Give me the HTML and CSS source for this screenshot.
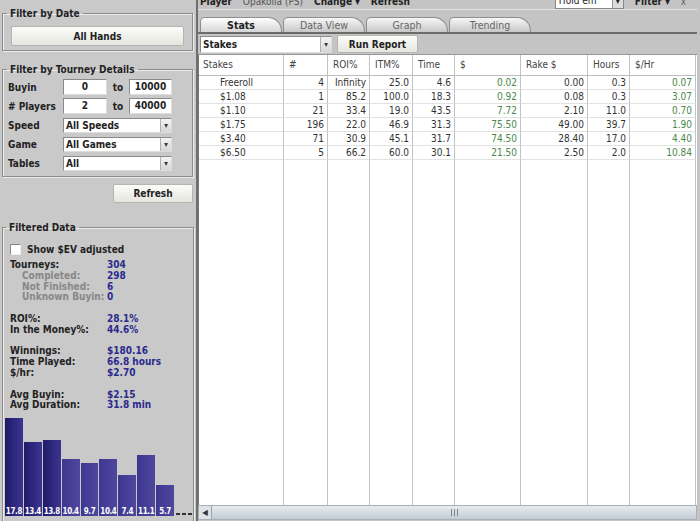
FILE: index.html
```html
<!DOCTYPE html>
<html lang="en">
<head>
    <meta charset="UTF-8">
    <title>Tourney Stats</title>
    <link rel="stylesheet" href="styles.css">
</head>
<body>
    <div class="app">
        <div class="side">
            <fieldset class="date-box">
                <legend>Filter by Date</legend>
                <button class="btn wide">All Hands</button>
            </fieldset>

            <fieldset class="tourney-box">
                <legend>Filter by Tourney Details</legend>
                <div class="filter-grid">
                    <span class="lbl">Buyin</span>
                    <span class="field">0</span>
                    <span class="to">to</span>
                    <span class="field">10000</span>

                    <span class="lbl"># Players</span>
                    <span class="field">2</span>
                    <span class="to">to</span>
                    <span class="field">40000</span>

                    <span class="lbl">Speed</span>
                    <span class="combo span3">All Speeds<i class="arrow">▾</i></span>
                    <span class="lbl">Game</span>
                    <span class="combo span3">All Games<i class="arrow">▾</i></span>
                    <span class="lbl">Tables</span>
                    <span class="combo span3">All<i class="arrow">▾</i></span>
                </div>
            </fieldset>

            <button class="btn refresh">Refresh</button>

            <fieldset class="data-box">
                <legend>Filtered Data</legend>
                <div class="check-row"><span class="check"></span>Show $EV adjusted</div>
                <div class="stats">
                    <span>Tourneys:</span><b>304</b>
                    <span class="sub">Completed:</span><b>298</b>
                    <span class="sub">Not Finished:</span><b>6</b>
                    <span class="sub">Unknown Buyin:</span><b>0</b>
                    <span class="gap"></span>
                    <span>ROI%:</span><b>28.1%</b>
                    <span>In the Money%:</span><b>44.6%</b>
                    <span class="gap"></span>
                    <span>Winnings:</span><b>$180.16</b>
                    <span>Time Played:</span><b>66.8 hours</b>
                    <span>$/hr:</span><b>$2.70</b>
                    <span class="gap"></span>
                    <span>Avg Buyin:</span><b>$2.15</b>
                    <span>Avg Duration:</span><b>31.8 min</b>
                </div>
                <div class="chart" id="chart"></div>
            </fieldset>
        </div>

        <div class="main">
            <div class="topbar">
                <span class="tb-b">Player</span>
                <span class="tb-n">Opakolla (PS)</span>
                <span class="tb-b">Change ▾</span>
                <span class="tb-b">Refresh</span>
                <span class="tb-fill"></span>
                <span class="tb-combo">Hold em<i class="arrow">▾</i></span>
                <span class="tb-b">Filter ▾</span>
                <span class="tb-x">x</span>
            </div>
            <div class="tabs">
                <div class="tab active">Stats</div>
                <div class="tab">Data View</div>
                <div class="tab">Graph</div>
                <div class="tab">Trending</div>
            </div>
            <div class="toolbar">
                <span class="combo report-combo">Stakes<i class="arrow">▾</i></span>
                <button class="btn run">Run Report</button>
            </div>
            <div class="grid" id="grid"></div>
            <div class="hscroll">
                <span class="hs-arrow">◀</span>
                <span class="hs-thumb"><span class="grip"></span></span>
            </div>
        </div>
    </div>

    <script>
        const headers = ['Stakes', '#', 'ROI%', 'ITM%', 'Time', '$', 'Rake $', 'Hours', '$/Hr'];
        const rows = [
            ['Freeroll', '4', 'Infinity', '25.0', '4.6', '0.02', '0.00', '0.3', '0.07'],
            ['$1.08', '1', '85.2', '100.0', '18.3', '0.92', '0.08', '0.3', '3.07'],
            ['$1.10', '21', '33.4', '19.0', '43.5', '7.72', '2.10', '11.0', '0.70'],
            ['$1.75', '196', '22.0', '46.9', '31.3', '75.50', '49.00', '39.7', '1.90'],
            ['$3.40', '71', '30.9', '45.1', '31.7', '74.50', '28.40', '17.0', '4.40'],
            ['$6.50', '5', '66.2', '60.0', '30.1', '21.50', '2.50', '2.0', '10.84']
        ];
        const greenCols = [5, 8];

        const grid = document.getElementById('grid');
        headers.forEach(h => {
            const cell = document.createElement('div');
            cell.className = 'cell head';
            cell.textContent = h;
            grid.appendChild(cell);
        });
        rows.forEach(row => {
            row.forEach((val, i) => {
                const cell = document.createElement('div');
                cell.className = i === 0 ? 'cell name' : 'cell num';
                if (greenCols.includes(i)) cell.classList.add('green');
                cell.textContent = val;
                grid.appendChild(cell);
            });
        });
        // empty filler row keeps the column lines running down
        headers.forEach(() => {
            const cell = document.createElement('div');
            cell.className = 'cell filler';
            grid.appendChild(cell);
        });

        const bars = [17.8, 13.4, 13.8, 10.4, 9.7, 10.4, 7.4, 11.1, 5.7];
        const chart = document.getElementById('chart');
        bars.forEach((v, i) => {
            const bar = document.createElement('div');
            bar.className = i < 3 ? 'bar dark' : 'bar';
            bar.style.height = (v * 5.5) + 'px';
            bar.innerHTML = '<span>' + v + '</span>';
            chart.appendChild(bar);
        });
        const more = document.createElement('div');
        more.className = 'bar more';
        chart.appendChild(more);
    </script>
</body>
</html>
```

FILE: styles.css
```css
body {
    margin: 0;
    width: 700px;
    height: 521px;
    overflow: hidden;
    background-color: #c6c6c6;
    font-family: "DejaVu Sans Condensed", "DejaVu Sans", sans-serif;
    font-stretch: condensed;
    font-size: 10px;
    color: #222;
}
.app {
    display: flex;
    height: 521px;
}
.arrow {
    font-style: normal;
}

/* left panel */
.side {
    width: 198px;
    flex: none;
    box-sizing: border-box;
    background-color: #c9c9c9;
    border-right: 2px solid #6e6e6e;
    padding-top: 8px;
    font-weight: bold;
}
fieldset {
    margin: 0 3px 0 2px;
    padding: 0 4px 4px 4px;
    border: 1px solid #8c8c8c;
    box-shadow: inset 1px 1px 0 #ececec, 1px 1px 0 #ececec;
}
legend {
    padding: 0 3px;
    line-height: 11px;
    color: #222;
}
.btn {
    font-family: inherit;
    font-stretch: condensed;
    font-size: 10px;
    font-weight: bold;
    color: #222;
    border: 1px solid #b4b4b0;
    border-radius: 2px;
    background: linear-gradient(#fbfbf8, #e6e6e0);
    padding: 0;
}
.wide {
    display: block;
    width: calc(100% - 8px);
    height: 20px;
    margin: 7px 4px 0 4px;
}
.tourney-box {
    margin-top: 13px;
    padding-bottom: 5px;
}
.filter-grid {
    display: grid;
    grid-template-columns: 56px 44px 22px 43px;
    grid-auto-rows: 16px;
    row-gap: 3px;
    align-items: center;
    margin-top: 4px;
}
.lbl {
    padding-left: 1px;
}
.to {
    text-align: center;
}
.field {
    height: 14px;
    line-height: 14px;
    background: #fff;
    border: 1px solid #8a8a8a;
    border-right-color: #ddd;
    border-bottom-color: #ddd;
    text-align: center;
}
.combo {
    position: relative;
    height: 13px;
    line-height: 13px;
    background: #fff;
    border: 1px solid #8a8a8a;
    border-right-color: #ddd;
    border-bottom-color: #ddd;
    padding-left: 2px;
}
.span3 {
    grid-column: 2 / 5;
}
.combo .arrow {
    position: absolute;
    right: 0;
    top: 0;
    width: 10px;
    height: 13px;
    line-height: 13px;
    text-align: center;
    font-size: 8px;
    color: #333;
    background: linear-gradient(#f4f4f4, #d6d6d6);
    border-left: 1px solid #b0b0b0;
}
.refresh {
    display: block;
    width: 80px;
    height: 19px;
    margin: 7px 3px 0 auto;
}
.data-box {
    margin-top: 19px;
    padding: 0 1px;
    height: 310px;
}
.data-box legend {
    margin-left: 2px;
}
.check-row {
    display: flex;
    align-items: center;
    height: 11px;
    margin-top: 11px;
    padding-left: 6px;
}
.check {
    width: 9px;
    height: 9px;
    background: #fff;
    border: 1px solid #888;
    border-right-color: #eee;
    border-bottom-color: #eee;
    margin-right: 6px;
}
.stats {
    display: grid;
    grid-template-columns: 97px auto;
    grid-auto-rows: 10.8px;
    line-height: 10.8px;
    margin-top: 5px;
    padding-left: 6px;
}
.stats b {
    color: #2b2b8e;
}
.stats .sub {
    padding-left: 12px;
    color: #878787;
}
.stats .gap {
    grid-column: 1 / 3;
}
.chart {
    display: flex;
    align-items: flex-end;
    gap: 1px;
    height: 100px;
    margin: 5px 0 0 1px;
}
.bar {
    width: 17.9px;
    flex: none;
    display: flex;
    align-items: flex-end;
    justify-content: center;
    background: linear-gradient(to right, #3e3791, #4f479c);
    color: #fff;
    font-size: 8px;
    letter-spacing: -0.4px;
    line-height: 9px;
}
.bar.dark {
    background: linear-gradient(to right, #1f1b68, #3b3592);
}
.bar.more {
    height: 2px;
    width: 16px;
    margin-left: 1px;
    margin-bottom: 1px;
    background: repeating-linear-gradient(to right, #333 0 4px, transparent 4px 6px);
}

/* right area */
.main {
    flex: 1;
    display: flex;
    flex-direction: column;
    background-color: #c4c4c4;
    padding-right: 3px;
    min-width: 0;
}
.topbar {
    height: 9px;
    display: flex;
    align-items: flex-end;
    overflow: hidden;
    padding-left: 2px;
    font-family: "DejaVu Sans", sans-serif;
    font-size: 10px;
}
.topbar span {
    height: 14px;
    line-height: 14px;
    margin-right: 11px;
}
.tb-b {
    font-weight: bold;
}
.tb-n {
    color: #555;
}
.tb-fill {
    flex: 1;
}
.tb-combo {
    position: relative;
    width: 64px;
    background: #fff;
    border: 1px solid #888;
    padding-left: 3px;
}
.tb-combo .arrow {
    position: absolute;
    right: 0;
    top: 0;
    width: 10px;
    text-align: center;
    background: #ddd;
    border-left: 1px solid #999;
}
.tb-x {
    color: #666;
}
.tabs {
    height: 22px;
    display: flex;
    align-items: flex-end;
    border-top: 1px solid #e4e4e4;
    border-bottom: 2px solid #6b6b6b;
    padding-left: 2px;
}
.tab {
    width: 80px;
    height: 14px;
    line-height: 14px;
    margin-right: 1px;
    text-align: center;
    color: #666;
    font-size: 10.5px;
    border: 1px solid #8e8e8e;
    border-bottom: none;
    border-radius: 5px 14px 0 0;
    background: linear-gradient(#f6f6f6, #c8c8c8);
}
.tab.active {
    color: #222;
    font-weight: bold;
    background: linear-gradient(#ffffff, #d6d6d6);
}
.toolbar {
    height: 20px;
    display: flex;
    align-items: center;
    padding-left: 2px;
    font-weight: bold;
}
.report-combo {
    width: 128px;
    height: 15px;
    line-height: 15px;
}
.report-combo .arrow {
    height: 15px;
    line-height: 15px;
}
.run {
    width: 81px;
    height: 18px;
    margin-left: 5px;
}
.grid {
    flex: 1;
    display: grid;
    grid-template-columns: 85px 44px 42px 43px 42px 66px 67px 42px 66px;
    grid-template-rows: 21px repeat(6, 14px) 1fr;
    background: #fff;
    border-top: 1px solid #999;
    border-left: 1px solid #777;
    overflow: hidden;
}
.cell {
    border-right: 1px solid #c2c2c2;
    border-bottom: 1px solid #e2e2e2;
    line-height: 13px;
    color: #333;
    white-space: nowrap;
    overflow: hidden;
}
.head {
    line-height: 20px;
    padding-left: 5px;
    color: #444;
    border-bottom-color: #bdbdbd;
}
.head:first-child {
    padding-left: 4px;
}
.name {
    padding-left: 21px;
}
.num {
    text-align: right;
    padding-right: 3px;
}
.green {
    color: #4a874a;
}
.filler {
    border-bottom: none;
}
.hscroll {
    height: 13px;
    display: flex;
    align-items: stretch;
    margin-bottom: 1px;
    background: #dfe3e8;
    border: 1px solid #a9b0b8;
}
.hs-arrow {
    width: 12px;
    font-size: 8px;
    line-height: 13px;
    text-align: center;
    color: #333;
}
.hs-thumb {
    flex: 1;
    display: flex;
    align-items: center;
    justify-content: center;
    background: linear-gradient(#e8ecf0, #c3cbd4);
    border-left: 1px solid #9aa3ad;
}
.grip {
    width: 7px;
    height: 7px;
    background: repeating-linear-gradient(to right, #7d8792 0 1px, transparent 1px 3px);
}
```
